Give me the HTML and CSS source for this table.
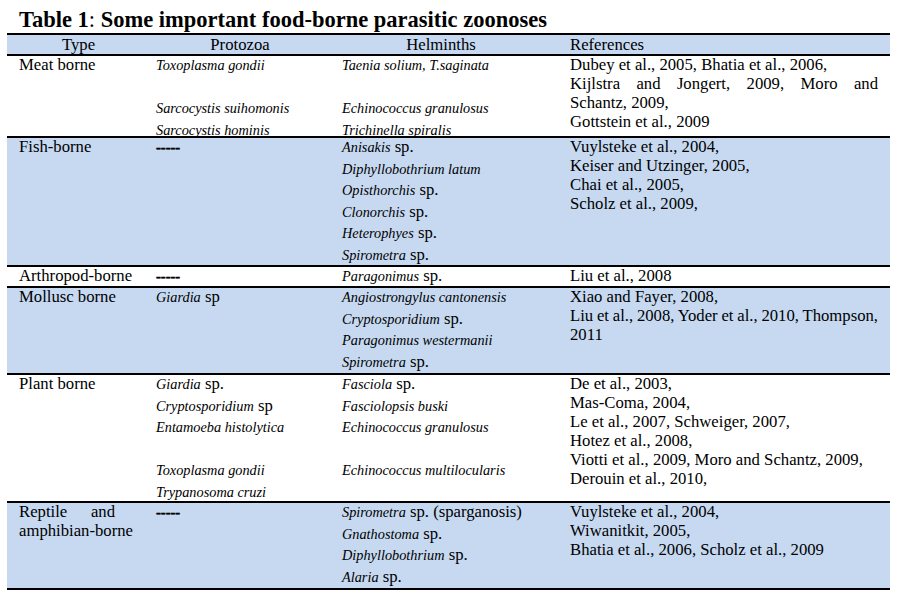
FILE: index.html
```html
<!DOCTYPE html>
<html lang="en">
<head>
<meta charset="utf-8">
<title>Table 1: Some important food-borne parasitic zoonoses</title>
<link rel="stylesheet" href="styles.css">
</head>
<body>
<h1 class="title">Table 1<span class="colon">:</span> Some important food-borne parasitic zoonoses</h1>
<div class="tbl">
  <div class="row head blue">
    <div class="c1 hc">Type</div>
    <div class="c2 hc">Protozoa</div>
    <div class="c3 hc">Helminths</div>
    <div class="c4">References</div>
  </div>

  <div class="row r-meat">
    <div class="c1"><div class="lines">Meat borne</div></div>
    <div class="c2"><div class="ilines">
      <div><i>Toxoplasma gondii</i></div>
      <div>&nbsp;</div>
      <div><i>Sarcocystis suihomonis</i></div>
      <div><i>Sarcocystis hominis</i></div>
    </div></div>
    <div class="c3"><div class="ilines">
      <div><i>Taenia solium, T.saginata</i></div>
      <div>&nbsp;</div>
      <div><i>Echinococcus granulosus</i></div>
      <div><i>Trichinella spiralis</i></div>
    </div></div>
    <div class="c4"><div class="lines">
      <div>Dubey et al., 2005, Bhatia et al., 2006,</div>
      <div class="just">Kijlstra and Jongert, 2009, Moro and</div>
      <div>Schantz, 2009,</div>
      <div>Gottstein et al., 2009</div>
    </div></div>
  </div>

  <div class="row r-fish blue">
    <div class="c1"><div class="lines">Fish-borne</div></div>
    <div class="c2"><div class="ilines"><div><span class="dash">-----</span></div></div></div>
    <div class="c3"><div class="ilines">
      <div><i>Anisakis</i> sp.</div>
      <div><i>Diphyllobothrium latum</i></div>
      <div><i>Opisthorchis</i> sp.</div>
      <div><i>Clonorchis</i> sp.</div>
      <div><i>Heterophyes</i> sp.</div>
      <div><i>Spirometra</i> sp.</div>
    </div></div>
    <div class="c4"><div class="lines">
      <div>Vuylsteke et al., 2004,</div>
      <div>Keiser and Utzinger, 2005,</div>
      <div>Chai et al., 2005,</div>
      <div>Scholz et al., 2009,</div>
    </div></div>
  </div>

  <div class="row r-arth">
    <div class="c1"><div class="lines">Arthropod-borne</div></div>
    <div class="c2"><div class="lines"><span class="dash">-----</span></div></div>
    <div class="c3"><div class="lines"><i>Paragonimus</i> sp.</div></div>
    <div class="c4"><div class="lines">Liu et al., 2008</div></div>
  </div>

  <div class="row r-moll blue">
    <div class="c1"><div class="lines">Mollusc borne</div></div>
    <div class="c2"><div class="ilines"><div><i>Giardia</i> sp</div></div></div>
    <div class="c3"><div class="ilines">
      <div><i>Angiostrongylus cantonensis</i></div>
      <div><i>Cryptosporidium</i> sp.</div>
      <div><i>Paragonimus westermanii</i></div>
      <div><i>Spirometra</i> sp.</div>
    </div></div>
    <div class="c4"><div class="lines">
      <div>Xiao and Fayer, 2008,</div>
      <div class="just tight">Liu et al., 2008, Yoder et al., 2010, Thompson,</div>
      <div>2011</div>
    </div></div>
  </div>

  <div class="row r-plant">
    <div class="c1"><div class="lines">Plant borne</div></div>
    <div class="c2"><div class="ilines">
      <div><i>Giardia</i> sp.</div>
      <div><i>Cryptosporidium</i> sp</div>
      <div><i>Entamoeba histolytica</i></div>
      <div>&nbsp;</div>
      <div><i>Toxoplasma gondii</i></div>
      <div><i>Trypanosoma cruzi</i></div>
    </div></div>
    <div class="c3"><div class="ilines">
      <div><i>Fasciola</i> sp.</div>
      <div><i>Fasciolopsis buski</i></div>
      <div><i>Echinococcus granulosus</i></div>
      <div>&nbsp;</div>
      <div><i>Echinococcus multilocularis</i></div>
    </div></div>
    <div class="c4"><div class="lines">
      <div>De et al., 2003,</div>
      <div>Mas-Coma, 2004,</div>
      <div>Le et al., 2007, Schweiger, 2007,</div>
      <div>Hotez et al., 2008,</div>
      <div>Viotti et al., 2009, Moro and Schantz, 2009,</div>
      <div>Derouin et al., 2010,</div>
    </div></div>
  </div>

  <div class="row r-rept blue">
    <div class="c1"><div class="lines">
      <div class="just narrow">Reptile and</div>
      <div>amphibian-borne</div>
    </div></div>
    <div class="c2"><div class="ilines"><div><span class="dash">-----</span></div></div></div>
    <div class="c3"><div class="ilines">
      <div><i>Spirometra</i> sp. (sparganosis)</div>
      <div><i>Gnathostoma</i> sp.</div>
      <div><i>Diphyllobothrium</i> sp.</div>
      <div><i>Alaria</i> sp.</div>
    </div></div>
    <div class="c4"><div class="lines">
      <div>Vuylsteke et al., 2004,</div>
      <div>Wiwanitkit, 2005,</div>
      <div>Bhatia et al., 2006, Scholz et al., 2009</div>
    </div></div>
  </div>
</div>
</body>
</html>
```

FILE: styles.css
```css
html, body {
  margin: 0;
  padding: 0;
  background: #ffffff;
}

body {
  font-family: "Liberation Serif", "Times New Roman", serif;
  color: #000000;
}

.title {
  margin: 0;
  padding: 7px 0 0 19px;
  height: 25px;
  font-size: 22.5px;
  line-height: 25px;
  font-weight: bold;
}

.title .colon {
  font-weight: normal;
}

.tbl {
  margin: 1px 0 0 7px;
  width: 883px;
  border-top: 2px solid #000;
  font-size: 16.7px;
}

.row {
  display: grid;
  grid-template-columns: 143px 180px 222px 338px;
  box-sizing: border-box;
  border-bottom: 2px solid #000;
}

.blue {
  background: #c6d9f1;
}

.head {
  height: 21px;
  line-height: 19px;
}

.r-meat { height: 82px; }
.r-fish { height: 129px; }
.r-arth { height: 21px; }
.r-moll { height: 87px; }
.r-plant { height: 128px; }
.r-rept { height: 87px; }

.c1 { padding-left: 12px; }
.c2 { padding-left: 6px; }
.c3 { padding-left: 12px; }
.c4 { padding-left: 18px; padding-right: 12px; }

.hc {
  padding-left: 0;
  text-align: center;
}

.lines {
  line-height: 19px;
  margin-top: -1px;
}

.ilines {
  line-height: 21.6px;
  margin-top: -2px;
}

.lines i,
.ilines i {
  font-size: 14.3px;
  line-height: 1;
}

.just {
  text-align: justify;
  text-align-last: justify;
}

.tight {
  word-spacing: -1px;
}

.narrow {
  width: 96px;
}

.dash {
  font-weight: bold;
  font-size: 14.5px;
  line-height: 1;
  -webkit-text-stroke: 0.5px #000;
}
```
